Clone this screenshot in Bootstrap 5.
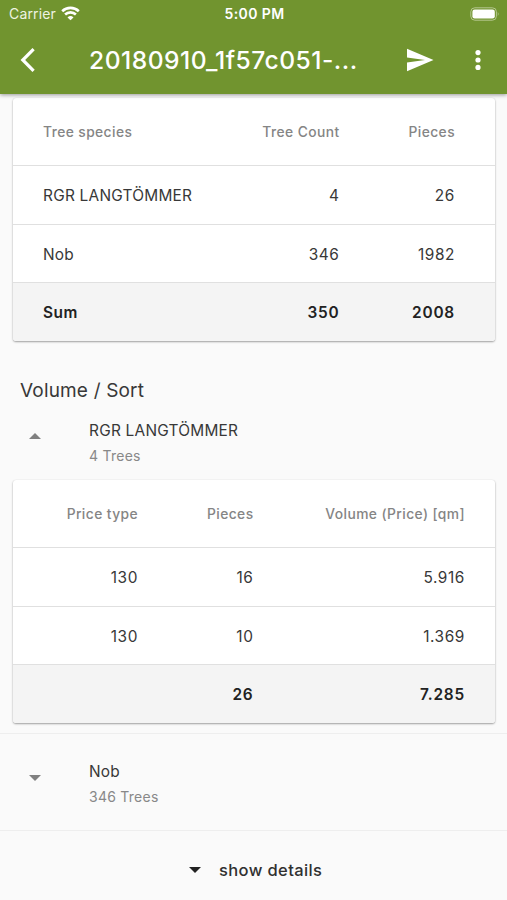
<!DOCTYPE html>
<html lang="en">
<head>
<meta charset="utf-8">
<meta name="viewport" content="width=device-width, initial-scale=1">
<title>Tree species summary</title>
<link href="https://cdn.jsdelivr.net/npm/bootstrap@5.3.0/dist/css/bootstrap.min.css" rel="stylesheet">
<style>
body { font-family: Inter, Roboto, sans-serif; background: #fafafa; color: #383838; font-size: 15.4px; line-height: 20px; letter-spacing: .25px; height: 900px; overflow: hidden; }
svg { display: block; flex: none; }
.app-header { background: #71942f; height: 94px; box-shadow: 0 1px 4px rgba(0,0,0,.4); position: relative; z-index: 2; }
.status-bar { height: 27px; font-size: 14px; display: grid; grid-template-columns: 1fr auto 1fr; padding: 0 7px 0 9px; }
.clock { font-weight: 600; font-size: 14px; letter-spacing: .4px; }
.carrier { color: #eef3e2; letter-spacing: .15px; }
.toolbar { height: 65px; padding: 0 26px 0 20px; }
.toolbar-title { font-size: 24.6px; font-weight: 500; line-height: 32px; margin-left: 53px; width: 285px; letter-spacing: .48px; }
.data-card { margin: 0 12px 0 13px; border-radius: 3px; background: #fff; box-shadow: 0 1px 2px rgba(0,0,0,.36), 0 0 1px rgba(0,0,0,.12); overflow: hidden; }
.data-table { table-layout: fixed; width: 482px; border-collapse: separate; border-spacing: 0; }
.data-table th { height: 67px; font-size: 13.8px; font-weight: 500; color: #858585; letter-spacing: .42px; }
.data-table td { height: 58.7px; border-top: 1px solid #e0e0e0; }
.data-table th, .data-table td { padding: 0; vertical-align: middle; }
.data-table td { padding-top: 2px; }
.data-table td.text-end { letter-spacing: .6px; }
.data-table .sum-row td { background: #f4f4f4; font-weight: 600; color: #222; letter-spacing: .8px; }
.data-table .sum-row td.first-cell { letter-spacing: .5px; }
.w-species { width: 200px; }
.w-count { width: 126.5px; }
.w-type { width: 125px; }
.w-pieces { width: 115.5px; }
.w-volume { width: 211.5px; }
.first-cell { padding-left: 30px !important; }
.section-title { font-size: 19px; line-height: 26px; margin: 37px 0 0 20px; letter-spacing: .17px; font-weight: 400; }
.species-row { padding-left: 29px; }
.species-text { margin-left: 48px; }
.sub-label { font-size: 14px; color: #888; line-height: 20px; margin-top: 5px; letter-spacing: .25px; }
.open-row { height: 76px; padding-top: 17px; }
.closed-row { height: 98px; border-top: 1px solid #eee; border-bottom: 1px solid #eee; margin-top: 10px; padding-top: 4px; }
.details-btn { height: 69px; padding: 9px 0 0 189px; font-weight: 500; font-size: 16.5px; color: #303030; letter-spacing: .38px; background: none; border: 0; }
</style>
<script src="https://cdn.jsdelivr.net/npm/bootstrap@5.3.0/dist/js/bootstrap.bundle.min.js" defer></script>
</head>
<body>
<header class="app-header text-white">
  <div class="status-bar align-items-center">
    <div class="d-flex align-items-center carrier">Carrier
      <svg width="19" height="15" viewBox="0 0 19 15" fill="none" stroke="#fff" stroke-width="2.6" style="margin-left:5px"><path d="M1.2 5.2A12 12 0 0 1 17.8 5.2M4.1 8.5A7.8 7.8 0 0 1 14.9 8.5"/><path d="M9.5 14.3L6.5 11.4A4.5 4.5 0 0 1 12.5 11.4Z" fill="#fff" stroke="none"/></svg>
    </div>
    <div class="clock">5:00 PM</div>
    <svg class="ms-auto" width="30" height="14" viewBox="0 0 30 14"><rect x=".8" y=".8" width="25.6" height="12.4" rx="4" fill="none" stroke="#b5c78f"/><rect x="2.4" y="2.4" width="22.4" height="9.2" rx="2.3" fill="#fff"/><path d="M27.8 4.8q1.7 2.2 0 4.4z" fill="#b5c78f"/></svg>
  </div>
  <div class="toolbar d-flex align-items-center">
    <svg width="16" height="24" viewBox="0 0 16 24" fill="none" stroke="#fff" stroke-width="3.2"><path d="M13.6 1.2L2.8 12L13.6 22.8"/></svg>
    <div class="toolbar-title">20180910_1f57c051-...</div>
    <svg class="ms-auto" width="28" height="24" viewBox="0 0 28 24" fill="#fff"><path d="M1 .8L27.5 12L1 23.2V14.5L19 12L1 9.5Z"/></svg>
    <svg width="6" height="20" viewBox="0 0 6 20" fill="#fff" style="margin-left:41px"><circle cx="3" cy="2.6" r="2.6"/><circle cx="3" cy="10" r="2.6"/><circle cx="3" cy="17.4" r="2.6"/></svg>
  </div>
</header>
<main>
  <section class="data-card mt-1">
    <table class="data-table">
      <colgroup><col class="w-species"><col class="w-count"><col><col style="width:40px"></colgroup>
      <thead><tr><th class="first-cell">Tree species</th><th class="text-end">Tree Count</th><th class="text-end">Pieces</th><th></th></tr></thead>
      <tbody>
        <tr><td class="first-cell">RGR LANGTÖMMER</td><td class="text-end">4</td><td class="text-end">26</td><td></td></tr>
        <tr><td class="first-cell">Nob</td><td class="text-end">346</td><td class="text-end">1982</td><td></td></tr>
        <tr class="sum-row"><td class="first-cell">Sum</td><td class="text-end">350</td><td class="text-end">2008</td><td></td></tr>
      </tbody>
    </table>
  </section>
  <h2 class="section-title">Volume / Sort</h2>
  <div class="species-row open-row d-flex">
    <svg width="12" height="6" viewBox="0 0 12 6" fill="#808080" style="margin-top:12px"><path d="M0 6L6 0L12 6Z"/></svg>
    <div class="species-text"><div>RGR LANGTÖMMER</div><div class="sub-label">4 Trees</div></div>
  </div>
  <section class="data-card">
    <table class="data-table">
      <colgroup><col class="w-type"><col class="w-pieces"><col class="w-volume"><col></colgroup>
      <thead><tr><th class="text-end">Price type</th><th class="text-end">Pieces</th><th class="text-end">Volume (Price) [qm]</th><th></th></tr></thead>
      <tbody>
        <tr><td class="text-end">130</td><td class="text-end">16</td><td class="text-end">5.916</td><td></td></tr>
        <tr><td class="text-end">130</td><td class="text-end">10</td><td class="text-end">1.369</td><td></td></tr>
        <tr class="sum-row"><td></td><td class="text-end">26</td><td class="text-end">7.285</td><td></td></tr>
      </tbody>
    </table>
  </section>
  <div class="species-row closed-row d-flex align-items-center">
    <svg width="12" height="6" viewBox="0 0 12 6" fill="#808080" style="margin-top:-12px"><path d="M0 0L6 6L12 0Z"/></svg>
    <div class="species-text"><div>Nob</div><div class="sub-label">346 Trees</div></div>
  </div>
  <button type="button" class="details-btn d-flex align-items-center">
    <svg width="12" height="6" viewBox="0 0 12 6" fill="#222"><path d="M0 0L6 6L12 0Z"/></svg>
    <span style="margin-left:18px">show details</span>
  </button>
</main>
</body>
</html>
